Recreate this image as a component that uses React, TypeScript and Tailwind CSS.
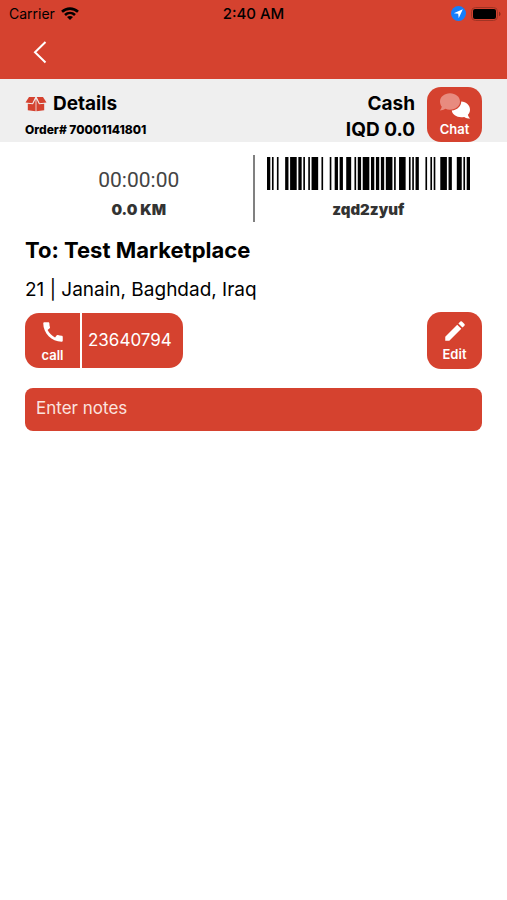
import { MdCall, MdEdit } from "react-icons/md";

// Code 128 element widths: start B, z q d 2 z y u f, checksum, stop
const CODE = [
    "211214", "214121", "121142", "141221", "223211", "214121",
    "212141", "124211", "112412", "111341", "2331112",
].join("");

function Barcode() {
    const bars: { x: number; w: number }[] = [];
    let x = 0;
    CODE.split("").forEach((c, i) => {
        const w = Number(c);
        if (i % 2 === 0) bars.push({ x, w });
        x += w;
    });

    return (
        <svg viewBox={`0 0 ${x} 20`} preserveAspectRatio="none" className="h-[33px] w-[203px]" role="img" aria-label="zqd2zyuf">
            {bars.map((b) => (
                <rect key={b.x} x={b.x} y="0" width={b.w} height="20" />
            ))}
        </svg>
    );
}

function WifiIcon() {
    return (
        <svg viewBox="0 0 18 13" className="h-[13px] w-[18px]" fill="none" stroke="currentColor" strokeWidth="2.6">
            <path d="M1 4.8C5.500 .6 12.500 .6 17 4.800" />
            <path d="M4 8C6.900 5.300 11.100 5.300 14 8" />
            <path d="M9 13L6 10.100C7.700 8.600 10.300 8.600 12 10.100Z" fill="currentColor" stroke="none" />
        </svg>
    );
}

function LocationIcon() {
    return (
        <svg viewBox="0 0 15 15" className="size-[15px]">
            <circle cx="7.500" cy="7.500" r="7.500" fill="#147efb" />
            <path d="M11.800 3.200L2.800 7.300L7.200 7.800L7.700 12.200Z" fill="#fff" />
        </svg>
    );
}

function BatteryIcon() {
    return (
        <svg viewBox="0 0 30 14" className="h-[14px] w-[30px]">
            <rect x="0.500" y="0.500" width="26" height="13" rx="4" fill="none" stroke="#a03424" />
            <rect x="2" y="2" width="23" height="10" rx="2" />
            <path d="M28 4.800C30 5.500 30 8.500 28 9.200Z" fill="#8c2a1d" />
        </svg>
    );
}

function BoxIcon() {
    return (
        <svg viewBox="0 0 22 16" className="h-4 w-[22px]" fill="#d5422f">
            <path d="M4 1H10.300L7.300 7.300L.5 6.600Z" />
            <path d="M18 1H11.700L14.700 7.300L21.500 6.600Z" />
            <path d="M2.800 7.800L8 8.300L10.600 3V15.300L2.800 14.300Z" />
            <path d="M19.200 7.800L14 8.300L11.400 3V15.300L19.200 14.300Z" />
        </svg>
    );
}

function ChatIcon() {
    return (
        <svg viewBox="0 0 32 26" className="h-[26px] w-8">
            <path d="M22.200 8.500C27.300 8.800 31 12.200 31 16.700C31 18.700 30.200 20.500 28.900 21.800C29.200 23.200 30 24.400 31.200 25.600C28.800 25.600 26.800 25 25.200 24C19 25.400 13.300 22.200 12.800 17.600C18.200 17 22.300 13.300 22.200 8.500Z" fill="#fff" />
            <path d="M11 .3C16.700 .3 21 3.900 21 8.500S16.700 16.700 11 16.700C9.300 16.700 7.700 16.400 6.300 15.800C4.700 16.900 2.800 17.500 .8 17.500C1.800 16.400 2.500 15.200 2.800 13.800C1.600 12.400 1 10.500 1 8.500C1 3.900 5.300 .3 11 .3Z" fill="#e88b7f" />
        </svg>
    );
}

export default function App() {
    return (
        <div className="min-h-screen w-full bg-white font-['Inter',sans-serif] text-black">
            <header className="bg-[#d5422f]">
                <div className="grid h-[27px] grid-cols-3 items-center px-1.5 text-sm">
                    <div className="flex items-center gap-1.5 pl-[3px]">
                        <span>Carrier</span>
                        <WifiIcon />
                    </div>
                    <span className="text-center text-[15px] font-medium">2:40 AM</span>
                    <div className="flex items-center justify-end gap-[5px]">
                        <LocationIcon />
                        <BatteryIcon />
                    </div>
                </div>
                <div className="flex h-[52px] items-start px-8 pt-[13px]">
                    <button type="button" aria-label="Back" className="text-white">
                        <svg viewBox="0 0 16 24" className="h-6 w-4" fill="none" stroke="currentColor" strokeWidth="2">
                            <path d="M13.500 2L3 12.300L13.500 22.500" />
                        </svg>
                    </button>
                </div>
            </header>

            <section className="flex h-[63px] justify-between bg-[#efefef] px-[25px] pt-2">
                <div className="flex flex-col pt-[5px]">
                    <h1 className="flex items-center gap-1.5 text-[19px] leading-6 font-bold">
                        <BoxIcon />
                        Details
                    </h1>
                    <p className="mt-1 text-xs leading-5 font-extrabold">Order# 70001141801</p>
                </div>
                <div className="flex gap-3">
                    <div className="pt-1 text-right text-[19px] leading-[26px] font-bold">
                        <p>Cash</p>
                        <p>IQD 0.0</p>
                    </div>
                    <button type="button" className="flex h-[55px] w-[55px] flex-col items-center rounded-[14px] bg-[#d5422f] pt-1.5 text-[13px] leading-5 font-semibold text-white">
                        <ChatIcon />
                        Chat
                    </button>
                </div>
            </section>

            <main className="px-[25px] pt-[13px]">
                <div className="flex h-[67px]">
                    <div className="flex flex-1 flex-col items-center pt-[11px]">
                        <p className="font-['Roboto',sans-serif] text-[21px] leading-7 text-[#444]">00:00:00</p>
                        <p className="mt-1 text-[15px] leading-6 font-black text-[#333]">0.0 KM</p>
                    </div>
                    <div className="w-0.5 bg-[#808080]" />
                    <div className="flex flex-1 flex-col items-center pt-0.5">
                        <Barcode />
                        <p className="mt-2 text-[15px] leading-6 font-black text-[#333]">zqd2zyuf</p>
                    </div>
                </div>

                <h2 className="mt-3 text-[22px] leading-8 font-bold">To: Test Marketplace</h2>
                <p className="mt-2.5 text-[19px] leading-7">21 | Janain, Baghdad, Iraq</p>

                <div className="mt-2 flex justify-between">
                    <div className="mt-px flex h-[55px] gap-0.5 text-white">
                        <button type="button" className="flex w-[55px] flex-col items-center rounded-l-[14px] bg-[#d5422f] pt-1.5 text-[13px] leading-5 font-semibold">
                            <MdCall size={26} />
                            call
                        </button>
                        <a href="tel:23640794" className="flex w-[101px] items-center rounded-r-[14px] bg-[#d5422f] pl-1.5 text-[17px]">
                            23640794
                        </a>
                    </div>
                    <button type="button" className="flex h-[57px] w-[55px] flex-col items-center rounded-[14px] bg-[#d5422f] pt-1.5 text-[13px] leading-5 font-semibold text-white">
                        <MdEdit size={26} />
                        Edit
                    </button>
                </div>

                <input
                    type="text"
                    aria-label="Enter notes"
                    placeholder="Enter notes"
                    className="mt-[19px] block h-[43px] w-full rounded-lg bg-[#d5422f] px-[11px] pb-1 text-[17px] text-white outline-none placeholder:text-[#fbe3df]"
                />
            </main>
        </div>
    );
}
